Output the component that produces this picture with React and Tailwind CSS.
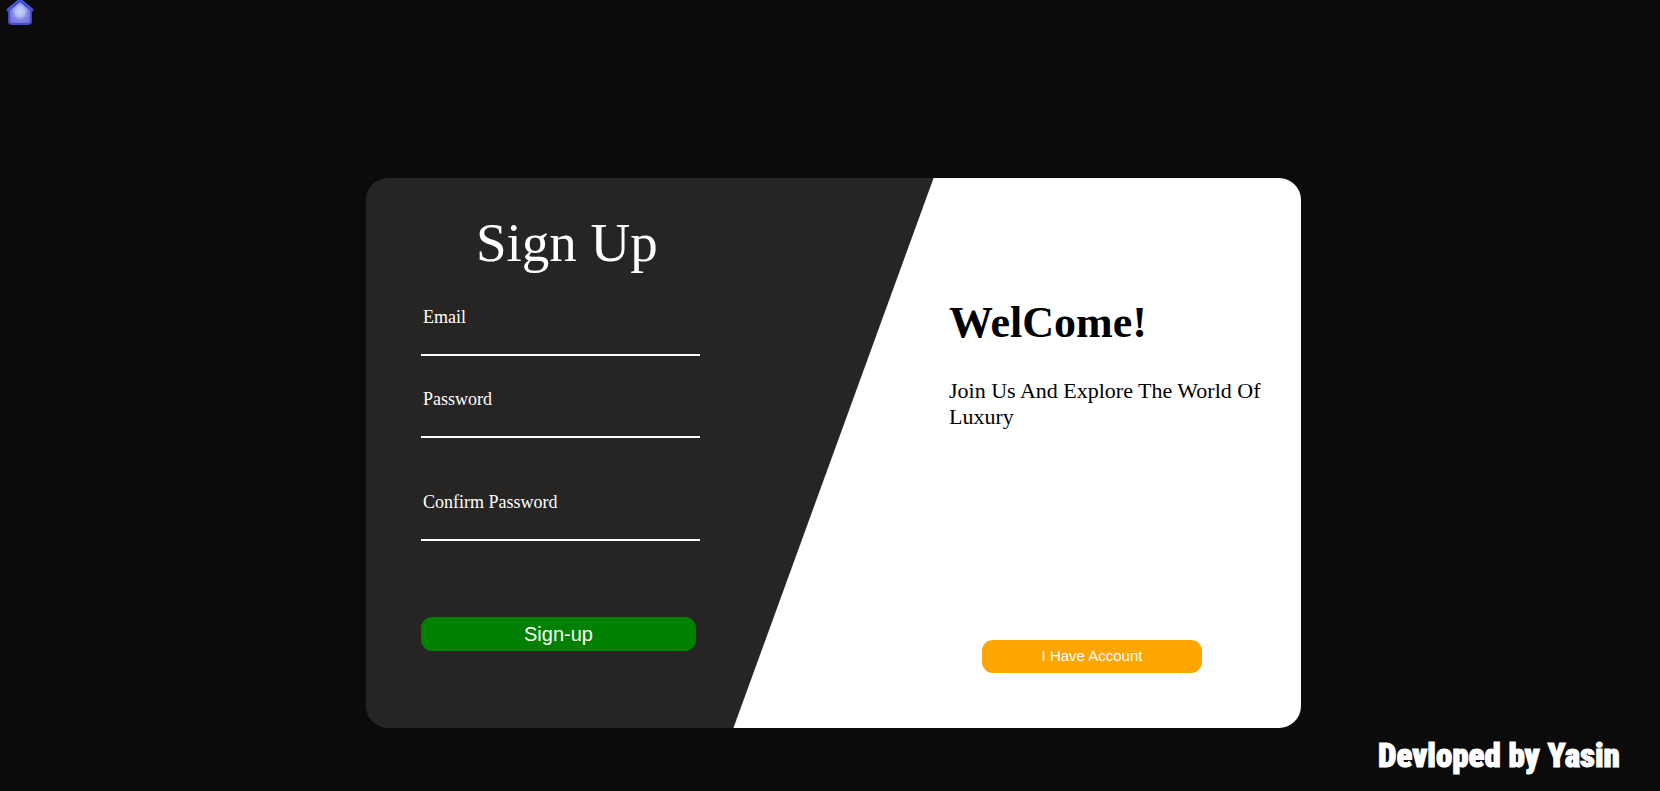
function Field({ id, label, type, className }) {
  return (
    <div className={className}>
      <label htmlFor={id} className="block pl-[2px] text-[18px] leading-5">
        {label}
      </label>
      <input
        id={id}
        type={type}
        className="block h-[29px] w-full border-b-2 border-white bg-transparent px-[2px] text-[18px] outline-none"
      />
    </div>
  );
}

function HomeIcon() {
  return (
    <svg viewBox="0 0 30 26" className="h-[26px] w-[30px]" aria-hidden="true">
      <defs>
        <radialGradient id="wall" cx="0.5" cy="0.48" r="0.6">
          <stop offset="0" stopColor="#c8d4f8" />
          <stop offset="0.35" stopColor="#b0bcf4" />
          <stop offset="0.6" stopColor="#8585e4" />
          <stop offset="1" stopColor="#7272da" />
        </radialGradient>
      </defs>
      <path d="M4 9.5 L15 0 L26 9.5 V21 Q26 24 23 24 H7 Q4 24 4 21 Z" fill="url(#wall)" stroke="#434dc4" strokeWidth="2" strokeLinejoin="round" />
      <path d="M3 10 L15 0 L27 10" fill="none" stroke="#3f4fcb" strokeWidth="3" strokeLinecap="round" strokeLinejoin="round" />
      <path d="M3 9 L15 -1 L27 9" fill="none" stroke="#4f66da" strokeWidth="1" strokeLinecap="round" />
    </svg>
  );
}

export default function App() {
  return (
    <div className="flex min-h-screen flex-col bg-[#0b0b0b] font-['Liberation_Serif',serif] text-white">
      <header className="h-[178px] pl-[5px]">
        <a href="#home" aria-label="Home" className="inline-block">
          <HomeIcon />
        </a>
      </header>
      <main className="pl-[7px]">
        <div className="mx-auto grid min-h-[550px] max-w-[935px] grid-cols-[1fr_386px] rounded-[22px] bg-[linear-gradient(110deg,#272524_49.95%,#ffffff_50.05%)]">
          <form className="w-[334px] pt-[34px] pl-[55px]">
            <h1 className="pl-[55px] text-[55px] leading-[62px] whitespace-nowrap">Sign Up</h1>
            <Field id="email" label="Email" type="email" className="mt-[33px]" />
            <Field id="password" label="Password" type="password" className="mt-[33px]" />
            <Field id="confirm" label="Confirm Password" type="password" className="mt-[54px]" />
            <button
              type="button"
              className="mt-[76px] block h-[34px] w-[275px] rounded-[11px] bg-[#008000] font-['Liberation_Sans',sans-serif] text-[20px]"
            >
              Sign-up
            </button>
          </form>
          <section className="flex flex-col pt-[120px] pr-[33px] pb-[55px] pl-[34px] text-black">
            <h2 className="text-[44px] leading-[50px] font-bold">WelCome!</h2>
            <p className="mt-[30px] text-[22px] leading-[26px]">Join Us And Explore The World Of Luxury</p>
            <button
              type="button"
              className="mt-auto ml-[33px] h-[33px] w-[220px] rounded-[11px] bg-[#ffa500] font-['Liberation_Sans',sans-serif] text-[15px] text-white"
            >
              I Have Account
            </button>
          </section>
        </div>
      </main>
      <footer className="flex justify-end pt-2 pr-10">
        <p className="font-['Roboto_Condensed','Liberation_Sans_Narrow','Liberation_Sans',sans-serif] text-[33px] leading-10 font-black [-webkit-text-stroke:1px_white]">
          Devloped by Yasin
        </p>
      </footer>
    </div>
  );
}
